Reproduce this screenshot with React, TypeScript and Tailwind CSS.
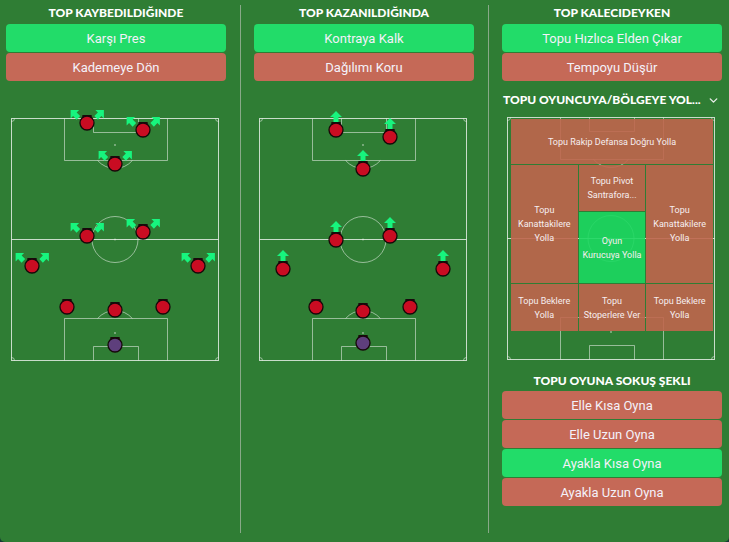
import { ChevronDown } from 'lucide-react';

type Arrow = 'diag' | 'up' | null;
type Player = { x: number; y: number; gk?: boolean; arrow?: Arrow };

const LINE = 'rgba(236,242,236,0.82)';
const LINE_DIM = 'rgba(236,242,236,0.55)';
const ARROW_FILL = '#17f57e';
// arrow pointing up, centred on origin
const ARROW = 'M0 -5.5 L6 0.5 L2.5 0.5 L2.5 5.5 L-2.5 5.5 L-2.5 0.5 L-6 0.5 Z';

const losePlayers: Player[] = [
  { x: 81, y: 23, arrow: 'diag' },
  { x: 137, y: 30, arrow: 'diag' },
  { x: 109, y: 64, arrow: 'diag' },
  { x: 81, y: 136, arrow: 'diag' },
  { x: 137, y: 132, arrow: 'diag' },
  { x: 26, y: 166, arrow: 'diag' },
  { x: 192, y: 166, arrow: 'diag' },
  { x: 61, y: 207 },
  { x: 109, y: 210 },
  { x: 157, y: 207 },
  { x: 109, y: 245, gk: true },
];

const winPlayers: Player[] = [
  { x: 82, y: 30, arrow: 'up' },
  { x: 136, y: 37, arrow: 'up' },
  { x: 109, y: 69, arrow: 'up' },
  { x: 82, y: 140, arrow: 'up' },
  { x: 136, y: 136, arrow: 'up' },
  { x: 29, y: 169, arrow: 'up' },
  { x: 189, y: 169, arrow: 'up' },
  { x: 62, y: 207 },
  { x: 109, y: 211 },
  { x: 156, y: 207 },
  { x: 109, y: 243, gk: true },
];

function PitchMarkings({ x, y }: { x: number; y: number }) {
  return (
    <g transform={`translate(${x} ${y})`} fill="none" strokeWidth={1}>
      <rect x={0.5} y={0.5} width={207} height={242} stroke={LINE} />
      <line x1={0.5} y1={121.5} x2={207.5} y2={121.5} stroke={LINE} />
      <circle cx={104} cy={121.5} r={23} stroke={LINE_DIM} />
      <circle cx={104} cy={121.5} r={0.9} fill={LINE_DIM} stroke="none" />
      {/* top end */}
      <path d="M53.5 0.5 V42.5 H156.5 V0.5" stroke={LINE_DIM} />
      <path d="M82.5 0.5 V14.5 H127.5 V0.5" stroke={LINE_DIM} />
      <circle cx={104} cy={27} r={0.9} fill={LINE_DIM} stroke="none" />
      <path d="M86.6 42.5 A23 23 0 0 0 121.4 42.5" stroke={LINE_DIM} />
      {/* bottom end */}
      <path d="M53.5 242.5 V200.5 H156.5 V242.5" stroke={LINE_DIM} />
      <path d="M82.5 242.5 V228.5 H127.5 V242.5" stroke={LINE_DIM} />
      <circle cx={104} cy={215} r={0.9} fill={LINE_DIM} stroke="none" />
      <path d="M86.6 200.5 A23 23 0 0 1 121.4 200.5" stroke={LINE_DIM} />
      {/* corners */}
      <path d="M0.5 3.5 A3 3 0 0 0 3.5 0.5" stroke={LINE_DIM} />
      <path d="M204.5 0.5 A3 3 0 0 0 207.5 3.5" stroke={LINE_DIM} />
      <path d="M3.5 242.5 A3 3 0 0 0 0.5 239.5" stroke={LINE_DIM} />
      <path d="M207.5 239.5 A3 3 0 0 0 204.5 242.5" stroke={LINE_DIM} />
    </g>
  );
}

function PlayerDot({ p }: { p: Player }) {
  return (
    <g transform={`translate(${p.x} ${p.y})`}>
      {p.arrow === 'up' && <path d={ARROW} transform="translate(0 -13.5)" fill={ARROW_FILL} />}
      {p.arrow === 'diag' && (
        <>
          <path d={ARROW} transform="translate(-12.5 -9) rotate(-45)" fill={ARROW_FILL} />
          <path d={ARROW} transform="translate(13 -9) rotate(45)" fill={ARROW_FILL} />
        </>
      )}
      <path d="M-5 -4 L-4.6 -8 L4.6 -8 L5 -4 Z" fill="#1a0b0e" />
      <circle r={7} fill={p.gk ? '#5e3f7c' : '#c90c22'} stroke="#160809" strokeWidth={1.3} />
    </g>
  );
}

function Formation({ players }: { players: Player[] }) {
  return (
    <svg width={220} height={270} viewBox="0 0 220 270" className="mt-[19px] block">
      <PitchMarkings x={5} y={18} />
      {players.map((p, i) => (
        <PlayerDot key={i} p={p} />
      ))}
    </svg>
  );
}

function Heading({ children }: { children: React.ReactNode }) {
  return (
    <h2 className="flex h-[24px] items-center justify-center pt-[2px] font-['Lato',sans-serif] text-[12px] font-black uppercase leading-none text-white">
      {children}
    </h2>
  );
}

function Option({ label, active }: { label: string; active?: boolean }) {
  return (
    <button
      className={`h-[28px] w-full rounded-[4px] text-[13px] leading-none text-[#f4f1fa] ${
        active ? 'bg-[#22dc69]' : 'bg-[#c56957]'
      }`}
    >
      {label}
    </button>
  );
}

function Divider() {
  return <div className="ml-[14px] mr-[13px] mt-[5px] h-[528px] w-px shrink-0 bg-[#88a988]" />;
}

function Zone({ children, active, className = '' }: { children: React.ReactNode; active?: boolean; className?: string }) {
  return (
    <div
      className={`flex items-center justify-center whitespace-nowrap text-center text-[9px] leading-[14px] text-[#f6eef0] ${
        active ? 'bg-[#1cd861]/90' : 'bg-[#c0654d]/90'
      } ${className}`}
    >
      {children}
    </div>
  );
}

function ZonePitch() {
  return (
    <div className="relative ml-[5px] mt-[9px] h-[243px] w-[208px]">
      <svg width={208} height={243} viewBox="0 0 208 243" className="block">
        <PitchMarkings x={0} y={0} />
      </svg>
      <div className="absolute left-[4px] top-[2px] grid h-[212px] w-[202px] grid-cols-3 grid-rows-[45px_118px_47px] gap-[1px]">
        <Zone className="col-span-3">Topu Rakip Defansa Doğru Yolla</Zone>
        <Zone>
          Topu
          <br />
          Kanattakilere
          <br />
          Yolla
        </Zone>
        <div className="flex flex-col gap-[1px]">
          <Zone className="h-[46px]">
            Topu Pivot
            <br />
            Santrafora...
          </Zone>
          <Zone active className="flex-1">
            Oyun
            <br />
            Kurucuya Yolla
          </Zone>
        </div>
        <Zone>
          Topu
          <br />
          Kanattakilere
          <br />
          Yolla
        </Zone>
        <Zone>
          Topu Beklere
          <br />
          Yolla
        </Zone>
        <Zone>
          Topu
          <br />
          Stoperlere Ver
        </Zone>
        <Zone>
          Topu Beklere
          <br />
          Yolla
        </Zone>
      </div>
    </div>
  );
}

export default function App() {
  return (
    <div className="h-[542px] w-[729px] bg-[#163a35]">
      <div className="flex h-full rounded-b-[5px] bg-[#2f7d34] pl-[6px] font-['Roboto',sans-serif]">
        <section className="w-[220px] shrink-0">
          <Heading>Top Kaybedildiğinde</Heading>
          <div className="flex flex-col gap-[1px]">
            <Option label="Karşı Pres" active />
            <Option label="Kademeye Dön" />
          </div>
          <Formation players={losePlayers} />
        </section>

        <Divider />

        <section className="w-[220px] shrink-0">
          <Heading>Top Kazanıldığında</Heading>
          <div className="flex flex-col gap-[1px]">
            <Option label="Kontraya Kalk" active />
            <Option label="Dağılımı Koru" />
          </div>
          <Formation players={winPlayers} />
        </section>

        <Divider />

        <section className="w-[220px] shrink-0">
          <Heading>Top Kalecideyken</Heading>
          <div className="flex flex-col gap-[1px]">
            <Option label="Topu Hızlıca Elden Çıkar" active />
            <Option label="Tempoyu Düşür" />
          </div>

          <div className="mt-[11px] flex h-[16px] items-center justify-between pl-[1px] pr-[2px]">
            <span className="font-['Lato',sans-serif] text-[12px] font-black leading-none text-white">
              TOPU OYUNCUYA/BÖLGEYE YOL...
            </span>
            <ChevronDown size={13} strokeWidth={2.6} className="text-[#e8ece8]" />
          </div>

          <ZonePitch />

          <h2 className="mt-[14px] flex h-[14px] items-center justify-center font-['Lato',sans-serif] text-[12px] font-black uppercase leading-none text-white">
            Topu Oyuna Sokuş Şekli
          </h2>
          <div className="mt-[3px] flex flex-col gap-[1px]">
            <Option label="Elle Kısa Oyna" />
            <Option label="Elle Uzun Oyna" />
            <Option label="Ayakla Kısa Oyna" active />
            <Option label="Ayakla Uzun Oyna" />
          </div>
        </section>
      </div>
    </div>
  );
}
